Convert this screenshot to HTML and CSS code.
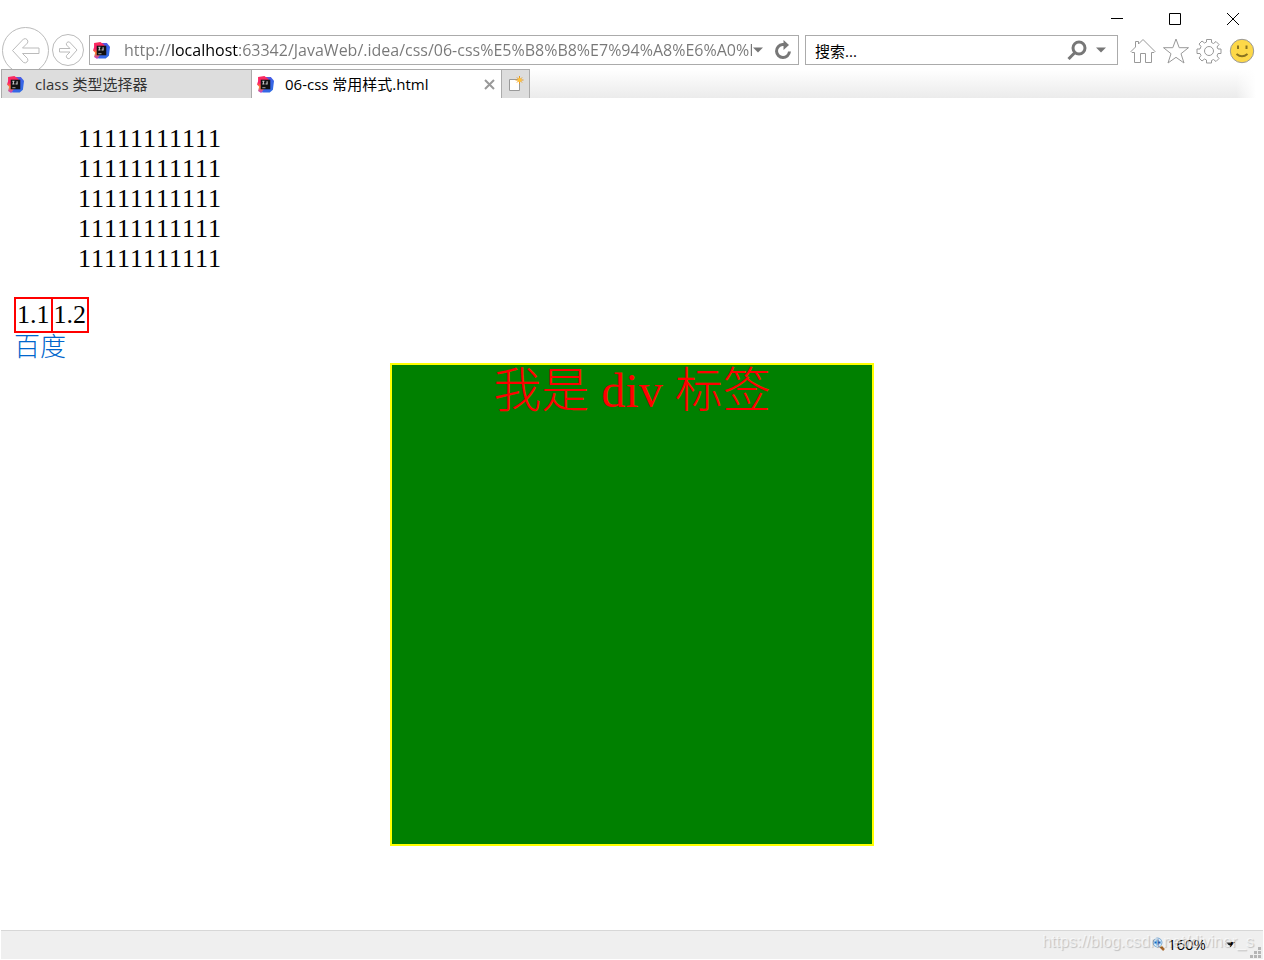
FILE: index.html
```html
<!DOCTYPE html>
<html lang="zh-CN">
<head>
<meta charset="utf-8">
<title>06-css 常用样式.html</title>
<link rel="stylesheet" href="styles.css">
</head>
<body class="window">
<svg class="defs" width="0" height="0" aria-hidden="true">
  <defs>
    <linearGradient id="blue" x1="0" y1="0" x2="1" y2="1"><stop offset="0" stop-color="#8a3fd0"/><stop offset=".5" stop-color="#3d62e8"/><stop offset="1" stop-color="#2a6fe0"/></linearGradient>
    <linearGradient id="hot" x1="0" y1="0" x2="0" y2="1"><stop offset="0" stop-color="#fb2c5c"/><stop offset=".4" stop-color="#fa1f6a"/><stop offset=".65" stop-color="#fb8a2a"/><stop offset="1" stop-color="#b52fd6"/></linearGradient>
    <symbol id="idea" viewBox="0 0 16 16">
      <path fill="url(#blue)" d="M8 1h5l3 3.500-1 8.500-3 2.500H5L3 9z"/>
      <path fill="url(#hot)" d="M1 1l6-1 4 3-2 6-3 4-2 3-3-2 1-4-2-2 1-3z"/>
      <path fill="#111" d="M3.500 3.500h9v9h-9z"/>
      <path fill="none" stroke="#ccc" d="M5 5h2M6 5v2.500M5 7.500h2M8 7.500h1.500V5"/>
      <path stroke="#999" d="M5 11h3"/>
    </symbol>
  </defs>
</svg>
<header class="chrome">
  <div class="titlebar">
    <button class="win-btn" aria-label="最小化"><svg width="12" height="12"><path d="M0 5.500h12"/></svg></button>
    <button class="win-btn" aria-label="最大化"><svg width="12" height="12"><path d="M.5.5h11v11H.5z"/></svg></button>
    <button class="win-btn" aria-label="关闭"><svg width="12" height="12"><path d="M0 0l12 12M12 0L0 12"/></svg></button>
  </div>
  <div class="navbar">
    <button class="nav-btn back" aria-label="后退"><svg width="47" height="47" viewBox="0 0 47 47"><circle cx="23.500" cy="23.500" r="23"/><path d="M10.500 23.500L21.500 12q2-1 3.500.5t.5 3.500l-5 5h16.500v5.500H20.500l5 5q1 2-.5 3.500t-3.500.5z"/></svg></button>
    <button class="nav-btn" aria-label="前进"><svg width="32" height="32" viewBox="0 0 32 32"><circle cx="16" cy="16" r="15.500"/><path d="M25 16l-7.500-8q-1.500-.5-2.500.5t-.5 2.500l3.500 3.500H7.500v3.500H18l-3.500 3.500q-.5 1.500.5 2.500t2.500.5z"/></svg></button>
    <div class="field address">
      <svg class="favicon" width="17" height="17"><use href="#idea"/></svg>
      <input class="url" type="text" aria-label="地址" value="http://localhost:63342/JavaWeb/.idea/css/06-css%E5%B8%B8%E7%94%A8%E6%A0%B7%E5%BC%8F.html">
      <button class="field-btn" aria-label="显示地址列表"><svg width="10" height="6"><path class="solid" d="M0 .5h10l-5 5z"/></svg></button>
      <button class="field-btn refresh" aria-label="刷新"><svg width="18" height="20" viewBox="0 0 18 20"><path class="thick" d="M10 4.500H8.500a6.500 6.500 0 1 0 7 7"/><path class="solid" d="M9.500 0l5.500 5-5.500 5z"/></svg></button>
    </div>
    <div class="field search">
      <input class="query" type="text" aria-label="搜索" value="搜索...">
      <button class="field-btn" aria-label="搜索"><svg width="20" height="20" viewBox="0 0 20 20"><circle class="thick" cx="12" cy="8" r="6"/><path class="thick" d="M8 12.500L1.500 19"/></svg></button>
      <button class="field-btn" aria-label="搜索选项"><svg width="10" height="6"><path class="solid" d="M0 .5h10l-5 5z"/></svg></button>
    </div>
    <div class="tools">
      <button class="tool" aria-label="主页"><svg width="26" height="26" viewBox="0 0 26 26"><path d="M1 13.500L5.500 9V3.500h3V6L13 1.500l12 12-1 1h-2.500v10h-6v-9h-5v9h-6v-10H2z"/></svg></button>
      <button class="tool" aria-label="收藏夹"><svg width="26" height="26" viewBox="0 0 26 26"><path d="M13 1l3.200 8.700h9.300l-7.500 6 3 9.300-8-5.700L5 25l3-9.300-7.500-6h9.300z"/></svg></button>
      <button class="tool" aria-label="工具"><svg width="26" height="26" viewBox="0 0 26 26"><path d="M10.500 1.500h5v3l2 1 2.500-2 3 3-2 2.500 1 2h3v4.500h-3l-1 2.500 2 2.500-3 3-2.500-2-2 1v2.500h-5V22l-2-1L6 23l-3-3 2-2.500-1-2H1V11h3l1-2.500L3 6l3-3 2.500 2 2-1z"/><circle cx="13" cy="13" r="4.500"/></svg></button>
      <button class="tool" aria-label="发送笑脸"><svg width="26" height="26" viewBox="0 0 26 26"><circle class="face" cx="13" cy="13" r="11.700"/><path class="smile" d="M9 7.500v3.500M17.500 7.500v3.500M7.500 16q5.500 4.500 11 0"/></svg></button>
    </div>
  </div>
  <nav class="tabs">
    <div class="tab"><svg class="favicon" width="17" height="17"><use href="#idea"/></svg><a class="tab-title" href="#class">class 类型选择器</a></div>
    <div class="tab active"><svg class="favicon" width="17" height="17"><use href="#idea"/></svg><a class="tab-title" href="#page">06-css 常用样式.html</a><button class="tab-close" aria-label="关闭选项卡"><svg width="11" height="11"><path d="M1 1l9 9M10 1l-9 9"/></svg></button></div>
    <button class="new-tab" aria-label="新建选项卡"><svg width="16" height="16" viewBox="0 0 16 16"><path fill="#fff" stroke="#999" d="M1.500 3.500h10v11h-10z"/><path stroke="#e79a22" d="M11.500 0v8M7.500 4h8M9 1.500l5 5M14 1.500l-5 5"/><circle cx="11.500" cy="4" r="2" fill="#ffc23a"/></svg></button>
  </nav>
</header>
<main class="page" id="page">
  <ul class="list">
    <li>11111111111</li>
    <li>11111111111</li>
    <li>11111111111</li>
    <li>11111111111</li>
    <li>11111111111</li>
  </ul>
  <table class="grid"><tr><td>1.1</td><td>1.2</td></tr></table>
  <a class="link" href="#baidu">百度</a>
  <div class="box">我是 div 标签</div>
</main>
<footer class="status">
  <button class="zoom"><svg width="13" height="14" viewBox="0 0 13 14"><path stroke="#a8672c" stroke-width="2.500" d="M8 9l4 4"/><circle cx="5.500" cy="5.500" r="4.500" fill="#d5ebfb" stroke="#79a8d2"/><path stroke="#1565c0" stroke-width="2" d="M5.500 2.500v6M2.500 5.500h6"/></svg><span>160%</span><svg class="zoom-arrow" width="9" height="5"><path d="M0 0h9L4.500 5z"/></svg></button>
  <svg class="grip" width="11" height="11"><path fill="#b5b5b5" d="M8 0h3v3H8zM4 4h3v3H4zM8 4h3v3H8zM0 8h3v3H0zM4 8h3v3H4zM8 8h3v3H8z"/></svg>
  <span class="watermark">https://blog.csdn.net/diviner_s</span>
</footer>
</body>
</html>
```
FILE: styles.css
```css
* { box-sizing: border-box; }
.window {
  margin: 0;
  min-height: 100vh;
  display: flex;
  flex-direction: column;
  background: #fff;
  color: #000;
  font: 15px/20px "Open Sans", "Noto Sans CJK SC", sans-serif;
}
.defs { position: absolute; }
button { border: 0; padding: 0; background: none; font: inherit; color: inherit; display: flex; align-items: center; justify-content: center; }
svg { display: block; flex: none; }
.titlebar { display: flex; justify-content: flex-end; height: 35px; padding: 3px 2px 0 0; }
.win-btn { width: 58px; height: 32px; }
.win-btn path { fill: none; stroke: #000; }
.navbar { display: flex; align-items: center; height: 30px; padding: 0 9px 0 2px; }
.nav-btn { margin-right: 3px; }
.nav-btn + .nav-btn { margin-right: 5px; }
.nav-btn svg { fill: none; stroke: #bbb; }
.field { display: flex; align-items: center; height: 30px; border: 1px solid #ababab; background: #fff; }
.address { flex: 1; min-width: 0; padding: 0 6px 0 3px; }
.field input { border: 0; padding: 0; outline: 0; min-width: 0; flex: 1; height: 24px; font: inherit; }
.field .url {
  margin: 0 1px 0 14px;
  color: transparent;
  font-size: 16px;
  background: linear-gradient(to right, #777 47px, #000 47px, #000 114px, #777 114px);
  -webkit-background-clip: text;
  background-clip: text;
}
.field .solid { fill: #777; }
.field .thick { fill: none; stroke: #777; stroke-width: 3; }
.refresh { margin-left: 11px; }
.search { width: 313px; margin-left: 6px; padding: 0 11px 0 9px; }
.search .field-btn + .field-btn { margin-left: 9px; }
.tools { display: flex; gap: 7px; margin: 2px 0 0 12px; }
.tool svg { fill: none; stroke: #999; }
.tool .face { fill: #fdd848; }
.tool .smile { stroke: #8a7320; stroke-width: 2; }
.tabs {
  position: relative;
  display: flex;
  height: 29px;
  margin: 4px 8px 0 1px;
  background: linear-gradient(to left, #fff, transparent 20px), linear-gradient(#fff, #ebebeb);
}
.tab { display: flex; align-items: center; flex: 0 1 251px; height: 29px; padding: 0 6px 0 5px; border: 1px solid #ababab; border-bottom: 0; background: #ddd; }
.tab.active { flex-basis: 250px; border-left: 0; background: #fff; }
.tab-title { flex: 1; margin-left: 11px; color: #333; text-decoration: none; white-space: nowrap; }
.active .tab-title { color: #000; }
.tab-close path { stroke: #999; stroke-width: 2; }
.new-tab { width: 28px; border: 1px solid #ababab; border-width: 1px 1px 0 0; background: #ddd; }
.page { flex: 1; padding: 26px 14px 0; font: 26px/30px "Liberation Serif", "Noto Sans CJK SC", serif; font-kerning: none; }
.list { margin: 0 0 23px; padding-left: 64px; list-style: none; }
.grid { border-collapse: collapse; }
.grid td { border: 2px solid #f00; padding: 1px; }
.link { display: block; width: max-content; color: #0066cc; font-weight: 300; text-decoration: none; }
.box { width: 484px; height: 483px; margin: 0 auto; border: 2px solid #ff0; background: #008000; color: #f00; font-size: 48px; font-weight: 300; line-height: 52px; text-align: center; }
.status { position: relative; display: flex; align-items: center; justify-content: flex-end; height: 29px; margin: 0 1px 1px; border-top: 1px solid #d7d7d7; background: #efefef; }
.zoom { gap: 3px; margin: 0 15px 2px 0; }
.zoom-arrow { margin-left: 17px; }
.grip { align-self: flex-end; margin: 0 2px 1px 0; }
.watermark { position: absolute; right: 9px; top: 1px; color: rgba(255, 255, 255, .6); font: 16px/20px "Liberation Sans", sans-serif; text-shadow: 1px 1px 1px rgba(0, 0, 0, .2); pointer-events: none; }
```
